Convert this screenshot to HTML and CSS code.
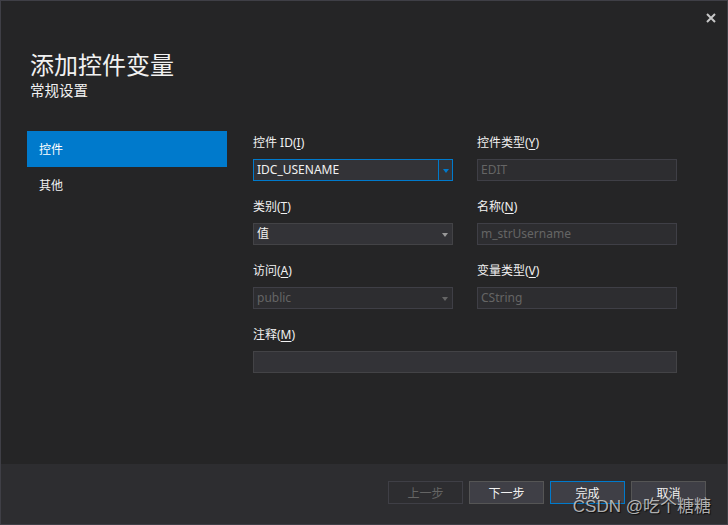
FILE: index.html
```html
<!DOCTYPE html>
<html lang="zh-CN">
<head>
<meta charset="utf-8">
<title>添加控件变量</title>
<link rel="stylesheet" href="styles.css">
</head>
<body>
<div class="window">
  <div class="topbar">
    <svg class="close" width="10" height="10" viewBox="0 0 10 10"><path d="M1 1 L9 9 M9 1 L1 9" stroke="#c8c8c8" stroke-width="2" fill="none"/></svg>
  </div>
  <div class="header">
    <div class="title">添加控件变量</div>
    <div class="subtitle">常规设置</div>
  </div>
  <div class="main">
    <div class="sidebar">
      <div class="nav-item active">控件</div>
      <div class="nav-item">其他</div>
    </div>
    <div class="form">
      <div class="field">
        <div class="label">控件 ID(<u>I</u>)</div>
        <div class="combo focused">
          <span class="value">IDC_USENAME</span>
          <span class="drop"><span class="arrow"></span></span>
        </div>
      </div>
      <div class="field">
        <div class="label">控件类型(<u>Y</u>)</div>
        <div class="input disabled"><span class="value">EDIT</span></div>
      </div>
      <div class="field">
        <div class="label">类别(<u>T</u>)</div>
        <div class="combo">
          <span class="value">值</span>
          <span class="drop"><span class="arrow"></span></span>
        </div>
      </div>
      <div class="field">
        <div class="label">名称(<u>N</u>)</div>
        <div class="input disabled"><span class="value">m_strUsername</span></div>
      </div>
      <div class="field">
        <div class="label">访问(<u>A</u>)</div>
        <div class="combo disabled">
          <span class="value">public</span>
          <span class="drop"><span class="arrow"></span></span>
        </div>
      </div>
      <div class="field">
        <div class="label">变量类型(<u>V</u>)</div>
        <div class="input disabled"><span class="value">CString</span></div>
      </div>
      <div class="field wide">
        <div class="label">注释(<u>M</u>)</div>
        <div class="input"><span class="value"></span></div>
      </div>
    </div>
  </div>
  <div class="footer">
    <div class="btn disabled">上一步</div>
    <div class="btn">下一步</div>
    <div class="btn default">完成</div>
    <div class="btn">取消</div>
  </div>
  <div class="watermark">CSDN @吃个糖糖</div>
</div>
</body>
</html>
```
FILE: styles.css
```css
* { box-sizing: border-box; }
html, body { margin: 0; padding: 0; background: #252526; }
body { font-family: "Noto Sans", "Noto Sans CJK SC", sans-serif; color: #f1f1f1; }
.window {
  position: relative;
  width: 728px;
  height: 525px;
  border: 1px solid #3f3f46;
  background: #252526;
  display: flex;
  flex-direction: column;
  overflow: hidden;
}
.topbar {
  height: 22px;
  padding: 12px 11px 0 0;
  display: flex;
  justify-content: flex-end;
}
.close { display: block; }
.header {
  padding: 25px 0 0 29px;
}
.title {
  font-family: "Noto Sans CJK SC", sans-serif;
  font-size: 24px;
  line-height: 32px;
  color: #f1f1f1;
}
.subtitle {
  font-family: "Noto Sans CJK SC", sans-serif;
  font-size: 14.5px;
  line-height: 20px;
  color: #f1f1f1;
}
.main {
  flex: 1;
  display: flex;
  padding: 31px 0 0 26px;
  gap: 26px;
}
.sidebar { width: 200px; display: flex; flex-direction: column; }
.nav-item {
  height: 36px;
  line-height: 36px;
  padding-left: 12px;
  font-size: 12px;
  color: #f1f1f1;
  font-family: "Noto Sans CJK SC", sans-serif;
}
.nav-item.active { background: #007acc; color: #ffffff; }
.form {
  padding-top: 3px;
  display: grid;
  grid-template-columns: 200px 200px;
  column-gap: 24px;
  row-gap: 17px;
  align-content: start;
}
.field { display: flex; flex-direction: column; gap: 7px; }
.field.wide { grid-column: 1 / span 2; }
.label {
  font-size: 12px;
  line-height: 18px;
  color: #f1f1f1;
}
.label u { text-underline-offset: 2px; }
.combo, .input {
  height: 22px;
  border: 1px solid #434346;
  background: #333337;
  display: flex;
  align-items: stretch;
}
.value {
  flex: 1;
  padding-left: 3px;
  font-size: 12px;
  line-height: 20px;
  color: #f1f1f1;
  white-space: nowrap;
}
.drop {
  width: 14px;
  display: flex;
  align-items: center;
  justify-content: center;
}
.arrow {
  width: 0; height: 0;
  border-left: 3.5px solid transparent;
  border-right: 3.5px solid transparent;
  border-top: 4px solid #999999;
  margin-top: 1px;
}
.combo.focused { border-color: #007acc; }
.combo.focused .drop { border-left: 1px solid #007acc; }
.combo.focused .arrow { border-top-color: #007acc; }
.disabled { background: #2d2d30; border-color: #3f3f46; }
.disabled .value { color: #656565; }
.combo.disabled .arrow { border-top-color: #656565; }
.footer {
  height: 60px;
  background: #2d2d30;
  display: flex;
  justify-content: flex-end;
  align-items: flex-start;
  gap: 6px;
  padding: 17px 21px 0 0;
}
.btn {
  width: 75px;
  height: 23px;
  border: 1px solid #555555;
  background: #3f3f46;
  font-family: "Noto Sans CJK SC", sans-serif;
  font-size: 12px;
  line-height: 21px;
  text-align: center;
  color: #f1f1f1;
}
.btn.disabled { background: transparent; border-color: #3f3f46; color: #656565; }
.btn.default { border-color: #007acc; }
.watermark {
  position: absolute;
  right: 16px;
  bottom: 6px;
  font-family: "Liberation Sans", "Noto Sans CJK SC", sans-serif;
  font-size: 17px;
  line-height: 22px;
  color: rgba(215, 215, 215, 0.8);
  text-shadow: 1px 1px 1px rgba(0, 0, 0, 0.7);
  pointer-events: none;
}
```
